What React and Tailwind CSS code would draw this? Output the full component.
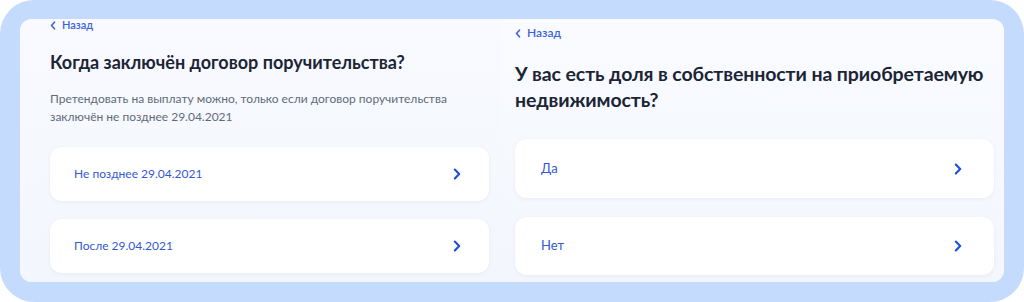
import React from "react";

const font = { fontFamily: "Lato, 'Noto Sans', sans-serif" };

function Chevron({ className = "" }) {
  return (
    <svg width="8" height="12" viewBox="0 0 8 12" className={className} fill="none">
      <path d="M1.8 1.5 L6.2 6 L1.8 10.5" stroke="#1d4ed8" strokeWidth="2.1" strokeLinecap="round" strokeLinejoin="round" />
    </svg>
  );
}

function Back({ size }) {
  return (
    <div className={`flex items-center gap-[6px] text-[#3d63db] font-semibold ${size}`}>
      <svg width="6" height="9" viewBox="0 0 6 9" fill="none">
        <path d="M4.5 1.2 L1.5 4.5 L4.5 7.8" stroke="#3d63db" strokeWidth="1.6" strokeLinecap="round" strokeLinejoin="round" />
      </svg>
      <span>Назад</span>
    </div>
  );
}

function Card({ label, h, pl, pr, text }) {
  return (
    <div
      className={`flex items-center justify-between bg-white rounded-[12px] shadow-[0_1px_4px_rgba(40,60,110,0.06)] ${h} ${pl} ${pr}`}
    >
      <span className={`text-[#3358d4] ${text}`}>{label}</span>
      <Chevron />
    </div>
  );
}

export default function App() {
  return (
    <div className="w-[1024px] h-[302px] bg-white" style={font}>
      <div className="w-full h-full bg-[#c4dbfd] rounded-[34px] pt-[19px] pb-[20px] px-[20px]">
        <div className="h-full bg-[#f7f9fe] rounded-[12px] flex overflow-hidden">
          {/* Left */}
          <div className="w-[480px] flex flex-col pl-[30px] pr-[11px] bg-gradient-to-b from-[#f8faff] to-[#f3f6fc]">
            <div className="h-[12px] flex items-center mt-0">
              <Back size="text-[11px]" />
            </div>
            <h2 className="mt-[19px] text-[18px] leading-[24px] font-bold text-[#1c2535]">
              Когда заключён договор поручительства?
            </h2>
            <p className="mt-[16px] text-[12px] leading-[18px] text-[#5f6b78]">
              Претендовать на выплату можно, только если договор поручительства
              <br />
              заключён не позднее 29.04.2021
            </p>
            <div className="mt-[21px] flex flex-col gap-[18px]">
              <Card label="Не позднее 29.04.2021" h="h-[54px]" pl="pl-[24px]" pr="pr-[28px]" text="text-[12px]" />
              <Card label="После 29.04.2021" h="h-[54px]" pl="pl-[24px]" pr="pr-[28px]" text="text-[12px]" />
            </div>
          </div>
          {/* Right */}
          <div className="flex-1 flex flex-col pl-[15px] pr-[10px] bg-gradient-to-b from-[#f9fbff] to-[#f3f6fc]">
            <div className="mt-[7px] h-[14px] flex items-center">
              <Back size="text-[12px]" />
            </div>
            <h2 className="mt-[21px] text-[19.5px] leading-[26px] font-bold text-[#1c2535] whitespace-nowrap tracking-[-0.1px]">
              У вас есть доля в собственности на приобретаемую
              <br />
              недвижимость?
            </h2>
            <div className="mt-[26px] flex flex-col gap-[19px]">
              <Card label="Да" h="h-[59px]" pl="pl-[26px]" pr="pr-[32px]" text="text-[13px]" />
              <Card label="Нет" h="h-[58px]" pl="pl-[26px]" pr="pr-[32px]" text="text-[13px]" />
            </div>
          </div>
        </div>
      </div>
    </div>
  );
}
